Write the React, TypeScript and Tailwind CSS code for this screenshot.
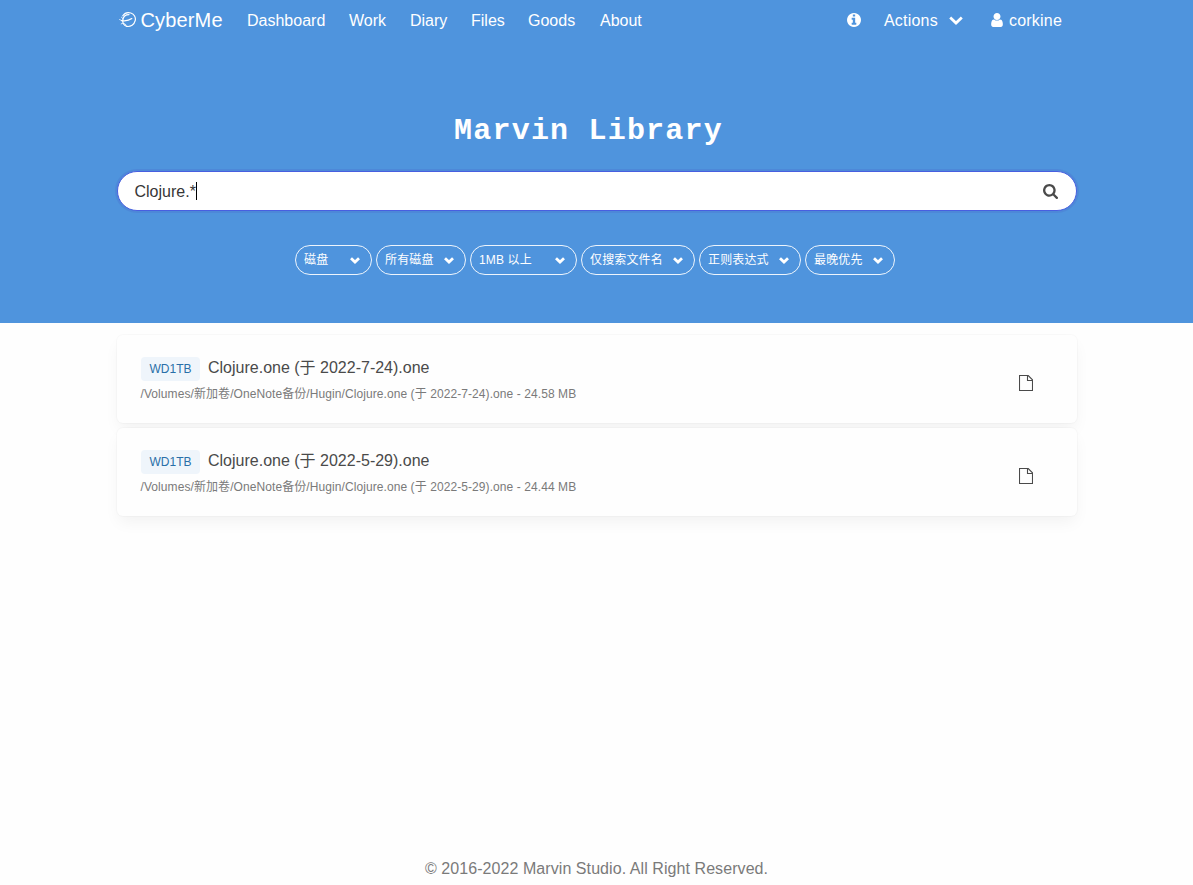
import React from "react";

function Logo() {
  return (
    <svg viewBox="0 0 18 18" className="h-[18px] w-[18px]" fill="none" stroke="#fff" strokeLinecap="round">
      <path d="M3.800 4.800C5.400 2.300 8.600 1.100 11.800 2c3.400 1 5.200 4.300 4.400 7.700-.9 3.900-4.600 6.300-8.400 5.700" strokeWidth="1.200" />
      <path d="M7.800 15.400C4.900 14.300 3.400 11.800 3.800 8.800 4.200 5.600 6.800 3.600 10 3.600" strokeWidth="1.200" />
      <path d="M2.600 9.600c3.600.6 7.400 0 10.200-2" strokeWidth="1.200" />
      <path d="M2.200 12.800c1.600-.9 3.400-.5 4.800 1M.6 8.600l2.600 1.200M2.400 6.200l1.600 1.600" strokeWidth=".8" />
    </svg>
  );
}

function InfoIcon() {
  return (
    <svg viewBox="128 128 1536 1536" className="h-[14px] w-[14px]" fill="#fff">
      <path d="M1152 1376v-160q0-14-9-23t-23-9h-96v-512q0-14-9-23t-23-9h-320q-14 0-23 9t-9 23v160q0 14 9 23t23 9h96v320h-96q-14 0-23 9t-9 23v160q0 14 9 23t23 9h448q14 0 23-9t9-23zm-128-896v-160q0-14-9-23t-23-9h-192q-14 0-23 9t-9 23v160q0 14 9 23t23 9h192q14 0 23-9t9-23zm640 416q0 209-103 385.5t-279.5 279.5-385.5 103-385.5-103-279.5-279.5-103-385.5 103-385.5 279.5-279.5 385.5-103 385.5 103 279.5 279.5 103 385.500z" />
    </svg>
  );
}

function UserIcon() {
  return (
    <svg viewBox="0 128 1280 1536" className="h-[14px] w-[12px]" fill="#fff">
      <path d="M1280 1399q0 109-62.5 187t-150.5 78h-854q-88 0-150.5-78t-62.5-187q0-85 8.5-160.5t31.5-152 58.5-131 94-89 134.5-34.5q131 128 313 128t313-128q76 0 134.5 34.5t94 89 58.5 131 31.5 152 8.5 160.5zm-256-887q0 159-112.5 271.5t-271.5 112.5-271.5-112.5-112.5-271.5 112.5-271.5 271.5-112.5 271.5 112.5 112.5 271.500z" />
    </svg>
  );
}

function SearchIcon() {
  return (
    <svg viewBox="64 128 1664 1664" className="h-[15px] w-[15px]" fill="#4a4a4a">
      <path d="M1216 832q0-185-131.5-316.5t-316.5-131.5-316.5 131.5-131.5 316.5 131.5 316.5 316.5 131.5 316.5-131.5 131.5-316.5zm512 832q0 52-38 90t-90 38q-54 0-90-38l-343-342q-179 124-399 124-143 0-273.5-55.5t-225-150-150-225-55.5-273.5 55.5-273.5 150-225 225-150 273.5-55.5 273.5 55.5 225 150 150 225 55.5 273.5q0 220-124 399l343 343q37 37 37 90z" />
    </svg>
  );
}

function FileIcon() {
  return (
    <svg viewBox="0 0 14 16" className="h-4 w-[14px]" fill="none" stroke="#4a4a4a">
      <path d="M.5.5h8.700l4.300 4.300v10.700H.5z" strokeWidth="1.100" />
      <path d="M8.500.5v5h5" strokeWidth="1.100" />
    </svg>
  );
}

const links = [
  { label: "Dashboard", width: "w-[102px]" },
  { label: "Work", width: "w-[61px]" },
  { label: "Diary", width: "w-[61px]" },
  { label: "Files", width: "w-[57px]" },
  { label: "Goods", width: "w-[72px]" },
  { label: "About", width: "w-[67px]" },
];

const filters = [
  { label: "磁盘", width: "w-[77px]" },
  { label: "所有磁盘", width: "w-[90px]" },
  { label: "1MB 以上", width: "w-[107px]" },
  { label: "仅搜索文件名", width: "w-[114px]" },
  { label: "正则表达式", width: "w-[102px]" },
  { label: "最晚优先", width: "w-[90px]" },
];

const results = [
  { disk: "WD1TB", date: "2022-7-24", size: "24.58 MB" },
  { disk: "WD1TB", date: "2022-5-29", size: "24.44 MB" },
];

function Navbar() {
  return (
    <nav className="mx-auto flex h-[41px] w-[960px] items-center pl-[2px] text-base text-white">
      <div className="flex w-[116px] items-center gap-1 whitespace-nowrap pb-px text-[20px] tracking-[0.15px]">
        <Logo />
        <span>CyberMe</span>
      </div>
      {links.map((link) => (
        <a key={link.label} className={`${link.width} whitespace-nowrap pl-[12.5px] pt-px`}>
          {link.label}
        </a>
      ))}
      <div className="ml-auto flex items-center pr-[14px]">
        <span className="pb-px"><InfoIcon /></span>
        <span className="ml-[23.5px] w-[55.5px] pt-px tracking-[0.2px]">Actions</span>
        <svg viewBox="0 0 14 9" className="ml-[9px] h-[9px] w-[14px]" fill="none" stroke="#fff" strokeWidth="2.800">
          <path d="M1.200 1.500 7 7l5.800-5.500" />
        </svg>
        <span className="ml-7 pb-px"><UserIcon /></span>
        <span className="ml-[6.5px] w-[53.5px] pt-px tracking-[0.2px]">corkine</span>
      </div>
    </nav>
  );
}

function Hero() {
  return (
    <header className="h-[323px] bg-[#4f94dd]">
      <Navbar />
      <div className="mx-auto flex w-[960px] flex-col items-center pt-[72px]">
        <h1
          className="whitespace-pre pr-[16px] text-[30px] font-bold leading-9 tracking-[1.2px] text-white"
          style={{ fontFamily: "'Liberation Mono', monospace" }}
        >
          Marvin Library
        </h1>
        <div className="mt-[22px] flex h-10 w-full items-center justify-between rounded-full border border-[#485fe0] bg-white pl-[17px] pr-[18px] shadow-[0_0_0_2px_rgba(72,95,199,0.22)]">
          <div className="flex items-center">
            <span className="pt-px text-base text-[#363636]">Clojure.*</span>
            <span className="h-[18px] w-px bg-black" />
          </div>
          <SearchIcon />
        </div>
        <div className="mt-[34px] flex gap-1 pr-[3px]">
          {filters.map((filter) => (
            <div
              key={filter.label}
              className={`${filter.width} flex h-[30px] items-center justify-between rounded-full border border-white/90 pl-2 pr-[11.5px] text-xs text-white`}
            >
              <span className="whitespace-nowrap tracking-[0.15px]">{filter.label}</span>
              <svg viewBox="0 0 10 7" className="h-[7px] w-[10px]" fill="none" stroke="#fff" strokeWidth="2.800">
                <path d="M1 1.200 5 5l4-3.800" />
              </svg>
            </div>
          ))}
        </div>
      </div>
    </header>
  );
}

export default function App() {
  return (
    <div
      className="flex h-[885px] flex-col overflow-hidden bg-[#fefefe]"
      style={{ fontFamily: "'Liberation Sans', 'Noto Sans CJK SC', sans-serif" }}
    >
      <Hero />
      <main className="mx-auto mt-3 flex w-[960px] flex-col gap-[5px]">
        {results.map((result) => (
          <article
            key={result.date}
            className="flex h-[88px] items-center justify-between rounded-md bg-[#fefefe] pl-6 pr-[44px] shadow-[0_8px_16px_-2px_rgba(10,10,10,0.05),0_0_0_1px_rgba(10,10,10,0.02)]"
          >
            <div className="pt-[2px]">
              <div className="flex h-6 items-center gap-2">
                <span className="flex h-6 w-[59px] items-center justify-center rounded bg-[#eff5fb] pl-px text-xs text-[#296fa8]">
                  {result.disk}
                </span>
                <span className="whitespace-nowrap pb-[3px] pl-[0.5px] text-base leading-[22px] text-[#4a4a4a]">
                  Clojure.one (于 {result.date}).one
                </span>
              </div>
              <p className="mt-1 whitespace-nowrap text-xs leading-[18px] tracking-[0.08px] text-[#7a7a7a]">
                /Volumes/新加卷/OneNote备份/Hugin/Clojure.one (于 {result.date}).one - {result.size}
              </p>
            </div>
            <div className="pt-[7px]">
              <FileIcon />
            </div>
          </article>
        ))}
      </main>
      <footer className="mt-auto pb-1 text-center text-base leading-6 tracking-[0.07px] text-[#7a7a7a]">
        © 2016-2022 Marvin Studio. All Right Reserved.
      </footer>
    </div>
  );
}
